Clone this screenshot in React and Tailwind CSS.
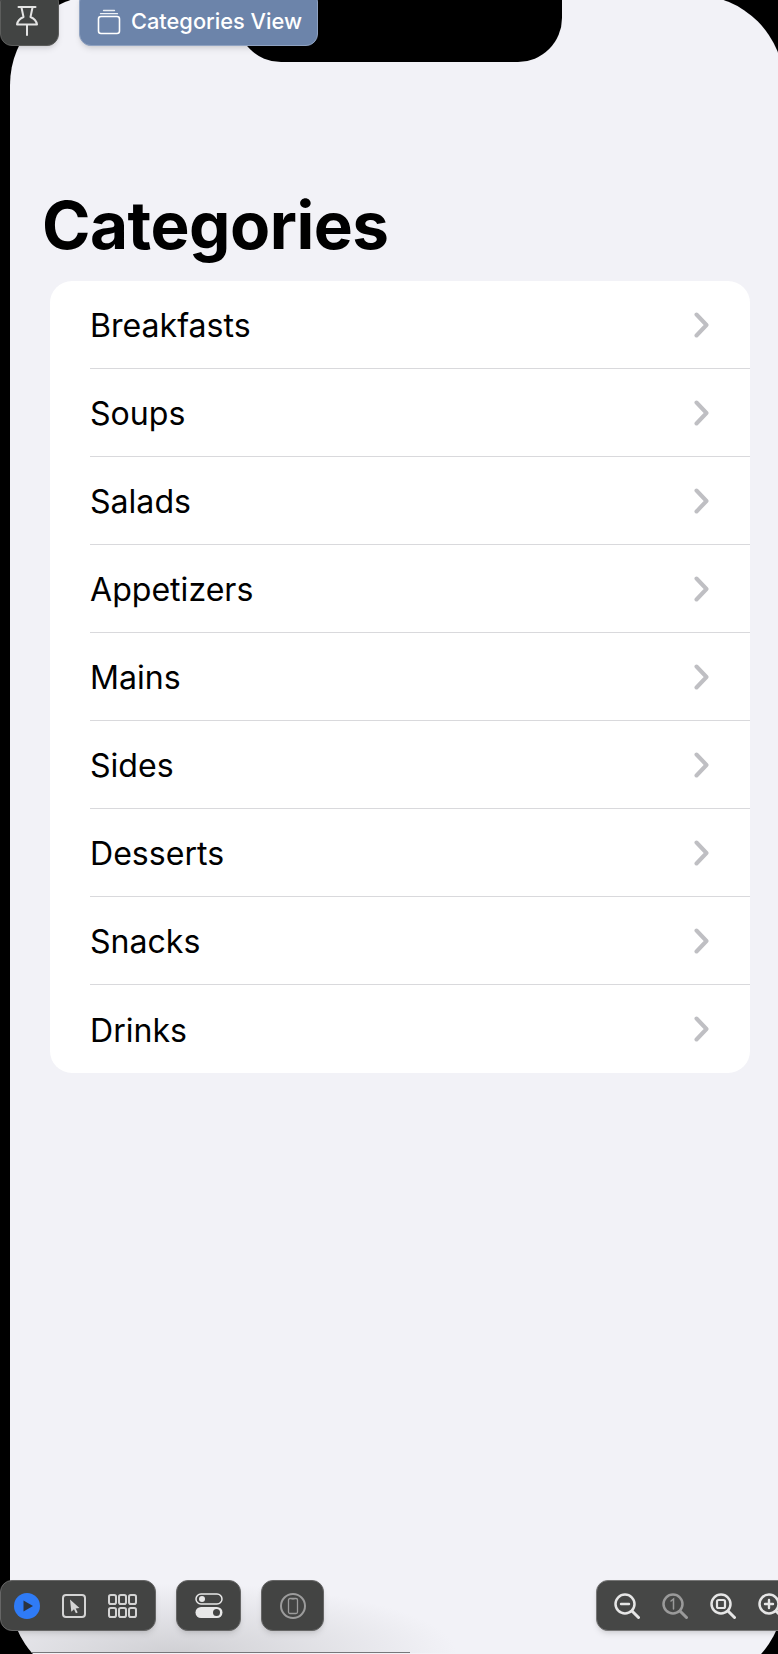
const categories = ['Breakfasts', 'Soups', 'Salads', 'Appetizers', 'Mains', 'Sides', 'Desserts', 'Snacks', 'Drinks']

function Chevron() {
  return (
    <svg width="15" height="26" viewBox="0 0 15 26" fill="none" className="shrink-0">
      <path d="M2.5 2.5 12.5 13 2.5 23.5" stroke="#bfbfc3" strokeWidth="4" strokeLinecap="round" strokeLinejoin="round" />
    </svg>
  )
}

function PinIcon() {
  return (
    <svg width="24" height="30" viewBox="0 0 24 30" fill="none" stroke="#e4e4e4" strokeWidth="2" strokeLinecap="round" strokeLinejoin="round">
      <path d="M3.500 1h17" />
      <path d="M6.500 1.500 8.500 11C5 12.500 2.500 15 2 18.500h20C21.500 15 19 12.500 15.500 11l2-9.500" />
      <path d="M12 19v10" />
    </svg>
  )
}

function LayersIcon() {
  return (
    <svg width="24" height="26" viewBox="0 0 24 26" fill="none" stroke="#fff" strokeLinecap="round">
      <path d="M6.500 1.500h11" strokeWidth="1.300" opacity="0.85" />
      <path d="M3.500 4.700h17" strokeWidth="1.300" opacity="0.9" />
      <rect x="1.500" y="7.500" width="21" height="17" rx="2.500" strokeWidth="1.600" />
    </svg>
  )
}

function PlayIcon() {
  return (
    <svg width="26" height="26" viewBox="0 0 26 26">
      <circle cx="13" cy="13" r="13" fill="#2f7bf6" />
      <path d="M9.500 7.500 19 13 9.500 18.500Z" fill="#2b3440" />
    </svg>
  )
}

function SelectIcon() {
  return (
    <svg width="24" height="24" viewBox="0 0 24 24" fill="none">
      <rect x="1" y="1" width="22" height="22" rx="3" stroke="#d4d4d4" strokeWidth="2" />
      <path d="M8 5.500 17.500 14l-3.800.4 2 4-1.800.8-1.900-4-2.700 2.500Z" fill="#d4d4d4" />
    </svg>
  )
}

function GridIcon() {
  const cells = [0, 10, 20].flatMap((x) => [0, 13].map((y) => [x, y]))
  return (
    <svg width="29" height="24" viewBox="0 0 29 24" fill="none">
      {cells.map(([x, y]) => (
        <rect key={`${x}-${y}`} x={x + 1} y={y + 1} width="7" height="9" rx="1.800" stroke="#d4d4d4" strokeWidth="2" />
      ))}
    </svg>
  )
}

function ToggleIcon() {
  return (
    <svg width="28" height="26" viewBox="0 0 28 26" fill="none">
      <rect x="1" y="1" width="26" height="10" rx="5" stroke="#e8e8e8" strokeWidth="1.500" />
      <circle cx="7" cy="6" r="3" fill="#e8e8e8" />
      <rect x="0.500" y="14" width="27" height="11" rx="5.500" fill="#e8e8e8" />
      <circle cx="21.500" cy="19.500" r="3.500" fill="#434443" />
    </svg>
  )
}

function DeviceIcon() {
  return (
    <svg width="26" height="26" viewBox="0 0 26 26" fill="none" stroke="#9c9c9c">
      <circle cx="13" cy="13" r="12" strokeWidth="2" />
      <rect x="8.500" y="5.500" width="9" height="15" rx="1.500" strokeWidth="1.300" />
      <path d="M11.500 6h3" strokeWidth="1" />
    </svg>
  )
}

function ZoomIcon({ dim, children }) {
  return (
    <svg width="26" height="26" viewBox="0 0 26 26" fill="none" stroke={dim ? '#9a9a9a' : '#e6e6e6'} strokeLinecap="round">
      <circle cx="11" cy="11" r="9.500" strokeWidth="2.500" />
      <path d="M18 18 24.500 24.500" strokeWidth="3" />
      {children}
    </svg>
  )
}

export default function App() {
  return (
    <div className="relative h-[1654px] w-[778px] overflow-hidden bg-black font-['Inter',sans-serif]">
      {/* phone screen */}
      <div className="relative ml-[10px] -mt-[5px] h-[1689px] w-[774px] overflow-hidden rounded-[90px] bg-[#f2f2f7] pt-[191px]">
        <h1 className="ml-[32px] h-[95px] text-[65.6px] leading-[78px] font-bold tracking-[-0.5px] text-black">Categories</h1>

        <ul className="ml-[40px] w-[700px] overflow-hidden rounded-[22px] bg-white">
          {categories.map((name, i) => (
            <li key={name} className="h-[88px] pl-[40px]">
              <div className={`flex h-full items-center justify-between pr-[41px] ${i < categories.length - 1 ? 'border-b border-[#d9d9dc]' : ''}`}>
                <span className="pt-[4px] text-[32.1px] leading-none text-black">{name}</span>
                <Chevron />
              </div>
            </li>
          ))}
        </ul>

        <div className="absolute top-0 left-[227px] h-[67px] w-[325px] rounded-b-[44px] bg-black" />
        <div className="absolute bottom-[31px] left-0 h-[70px] w-[470px] bg-[radial-gradient(ellipse_60%_100%_at_35%_100%,#d0d0d4,#f2f2f700)]" />
        <div className="absolute bottom-[31px] left-0 h-px w-[400px] bg-[#77777a]" />
      </div>

      {/* top overlay buttons */}
      <div className="absolute top-[-10px] left-0 flex gap-[20px]">
        <div className="flex h-[56px] w-[59px] shrink-0 items-end justify-center rounded-[12px] border border-[#5c5d5c] bg-[#424443] pr-[5px] pb-[9px] shadow-md">
          <PinIcon />
        </div>
        <div className="flex h-[56px] w-[239px] shrink-0 items-center gap-[10px] rounded-[12px] border border-[#8fa2c1] bg-[#6c84aa] pt-[7px] pl-[17px] shadow-md">
          <LayersIcon />
          <span className="text-[21.8px] font-medium whitespace-nowrap text-white">Categories View</span>
        </div>
      </div>

      {/* bottom toolbars */}
      <div className="absolute top-[1580px] left-0 flex h-[51px]">
        <div className="flex w-[156px] shrink-0 items-center rounded-[12px] border border-[#666] bg-[#434443] pl-[13px] shadow-md">
          <PlayIcon />
          <div className="ml-[22px]"><SelectIcon /></div>
          <div className="ml-[22px]"><GridIcon /></div>
        </div>
        <div className="ml-[20px] flex w-[65px] shrink-0 items-center justify-center rounded-[12px] border border-[#666] bg-[#434443] shadow-md">
          <ToggleIcon />
        </div>
        <div className="ml-[20px] flex w-[63px] shrink-0 items-center justify-center rounded-[12px] border border-[#666] bg-[#434443] shadow-md">
          <DeviceIcon />
        </div>
        <div className="ml-[272px] flex w-[240px] shrink-0 items-center gap-[22px] rounded-[12px] border border-[#777] bg-[#464746] pl-[17px] shadow-md">
          <ZoomIcon><path d="M7 11h8" strokeWidth="2.400" /></ZoomIcon>
          <ZoomIcon dim><path d="M9 8l2.500-2v10" strokeWidth="1.500" /></ZoomIcon>
          <ZoomIcon><rect x="7" y="7" width="8" height="8" rx="1.500" strokeWidth="2.200" /></ZoomIcon>
          <ZoomIcon><path d="M7 11h8M11 7v8" strokeWidth="2.400" /></ZoomIcon>
        </div>
      </div>
    </div>
  )
}
